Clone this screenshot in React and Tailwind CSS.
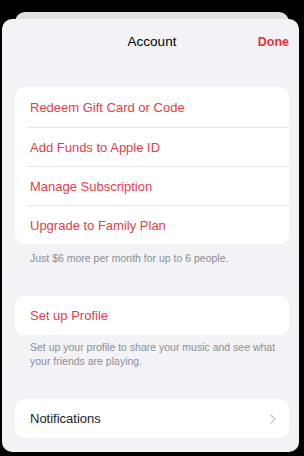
export default function App() {
  const rows = [
    "Redeem Gift Card or Code",
    "Add Funds to Apple ID",
    "Manage Subscription",
    "Upgrade to Family Plan",
  ];
  return (
    <div
      className="w-[304px] h-[456px] bg-black overflow-hidden flex flex-col"
      style={{ fontFamily: '"Liberation Sans", Arial, sans-serif' }}
    >
      <div className="ml-[15px] w-[274px] mt-[12px] h-[20px] rounded-t-[10px] bg-[#e1e1df] shrink-0" />
      <div className="-mt-[13px] ml-[2px] w-[297px] h-[433px] rounded-[10px] bg-[#f2f2f7] pl-[13px] pr-[10px] flex flex-col shrink-0">
        <div className="h-[47px] grid grid-cols-[1fr_auto_1fr] items-center">
          <div />
          <div className="text-[13.5px] text-black">Account</div>
          <div className="text-right text-[12.5px] font-bold text-[#e5303a]">Done</div>
        </div>

        <div className="mt-[21px] bg-white rounded-[9px] flex flex-col overflow-hidden">
          {rows.map((r, i) => (
            <div key={r} className={`flex flex-col ${i === 0 ? "h-[40px]" : "h-[39px]"}`}>
              {i > 0 && <div className="ml-[12px] h-[1px] bg-[#e6e6ea] shrink-0" />}
              <div className="flex-1 flex items-center pl-[15px] pt-[1px] text-[13px] text-[#e3404a]">
                {r}
              </div>
            </div>
          ))}
        </div>
        <div className="mt-[7px] pl-[15px] text-[10.5px] leading-[14px] text-[#8e8e92]">
          Just $6 more per month for up to 6 people.
        </div>

        <div className="mt-[31px] bg-white rounded-[9px] h-[39px] flex items-center pl-[15px] pt-[1px] text-[13px] text-[#e3404a]">
          Set up Profile
        </div>
        <div className="mt-[5px] pl-[15px] text-[10.5px] leading-[14.4px] text-[#8e8e92]">
          Set up your profile to share your music and see what
          <br />
          your friends are playing.
        </div>

        <div className="mt-[30px] bg-white rounded-[9px] h-[39px] flex items-center justify-between pl-[15px] pr-[13px] pt-[1px] text-[13px] text-[#1c1c1e]">
          <span>Notifications</span>
          <svg width="6" height="10" viewBox="0 0 6 10" fill="none">
            <path d="M1 1l4 4-4 4" stroke="#c4c4c8" strokeWidth="1.3" strokeLinecap="round" strokeLinejoin="round" />
          </svg>
        </div>
      </div>
    </div>
  );
}
